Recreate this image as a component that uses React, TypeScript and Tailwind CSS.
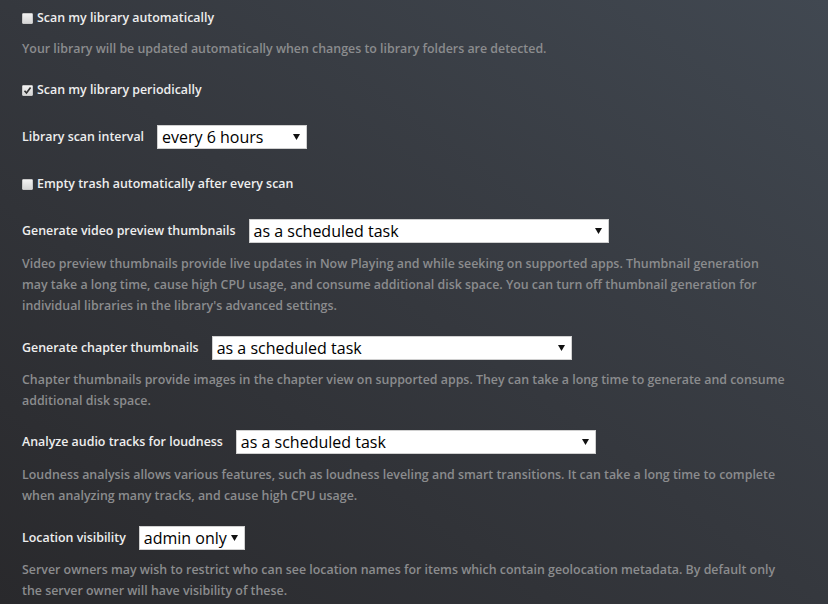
import React from 'react';

const font = { fontFamily: '"Open Sans", "Noto Sans", sans-serif' };

const Checkbox: React.FC<{ checked?: boolean; label: string }> = ({ checked, label }) => (
  <label className="flex items-center h-5 gap-1 text-[12.4px] font-semibold text-[#eeeeee]">
    <span className="relative w-[11px] h-[11px] rounded-[1px] border border-[#c8c8c8] bg-gradient-to-b from-[#f2f2f2] to-[#d6d6d6] flex items-center justify-center">
      {checked && (
        <svg width="9" height="9" viewBox="0 0 9 9">
          <path d="M1.5 4.8 L3.5 7 L7.6 1.6" fill="none" stroke="#333" strokeWidth="1.7" />
        </svg>
      )}
    </span>
    <span>{label}</span>
  </label>
);

const Select: React.FC<{ value: string; width: string }> = ({ value, width }) => (
  <div
    className={`${width} h-6 ml-[13px] flex items-center justify-between bg-white border border-[#d0d0d0] pl-[4px] pr-[6px] text-black text-[16px] font-normal`}
  >
    <span className="leading-none">{value}</span>
    <svg width="7" height="6" viewBox="0 0 7 6">
      <path d="M0 0 H7 L3.5 6 Z" fill="#111" />
    </svg>
  </div>
);

const SelectRow: React.FC<{ label: string; value: string; width: string }> = ({ label, value, width }) => (
  <div className="flex items-center h-6">
    <span className="text-[12.4px] font-semibold text-[#eeeeee]">{label}</span>
    <Select value={value} width={width} />
  </div>
);

const Help: React.FC<{ children: React.ReactNode; mt?: string }> = ({ children, mt = 'mt-[9px]' }) => (
  <p className={`${mt} text-[12.4px] leading-[21px] font-semibold text-[#8b8c8e]`}>{children}</p>
);

export default function App() {
  return (
    <div
      style={font}
      className="w-[828px] h-[604px] overflow-hidden bg-linear-to-bl from-[#414851] via-[#35383e] to-[#29292c]"
    >
      <div className="w-[765px] ml-[22px] pt-[8px]">
        <div className="mb-[21px]">
          <Checkbox label="Scan my library automatically" />
          <Help mt="mt-[10px]">
            Your library will be updated automatically when changes to library folders are detected.
          </Help>
        </div>

        <div className="mb-[25px]">
          <Checkbox checked label="Scan my library periodically" />
        </div>

        <div className="mb-[25px]">
          <SelectRow label="Library scan interval" value="every 6 hours" width="w-[150px]" />
        </div>

        <div className="mb-[25px]">
          <Checkbox label="Empty trash automatically after every scan" />
        </div>

        <div className="mb-[20px]">
          <SelectRow label="Generate video preview thumbnails" value="as a scheduled task" width="w-[360px]" />
          <Help mt="mt-[10px]">
            Video preview thumbnails provide live updates in Now Playing and while seeking on supported apps. Thumbnail
            generation may take a long time, cause high CPU usage, and consume additional disk space. You can turn off
            thumbnail generation for individual libraries in the library's advanced settings.
          </Help>
        </div>

        <div className="mb-[19px]">
          <SelectRow label="Generate chapter thumbnails" value="as a scheduled task" width="w-[360px]" />
          <Help>
            Chapter thumbnails provide images in the chapter view on supported apps. They can take a long time to
            generate and consume additional disk space.
          </Help>
        </div>

        <div className="mb-[20px]">
          <SelectRow label="Analyze audio tracks for loudness" value="as a scheduled task" width="w-[360px]" />
          <Help mt="mt-[10px]">
            Loudness analysis allows various features, such as loudness leveling and smart transitions. It can take a
            long time to complete when analyzing many tracks, and cause high CPU usage.
          </Help>
        </div>

        <div>
          <SelectRow label="Location visibility" value="admin only" width="w-[106px]" />
          <Help>
            Server owners may wish to restrict who can see location names for items which contain geolocation metadata.
            By default only the server owner will have visibility of these.
          </Help>
        </div>
      </div>
    </div>
  );
}
